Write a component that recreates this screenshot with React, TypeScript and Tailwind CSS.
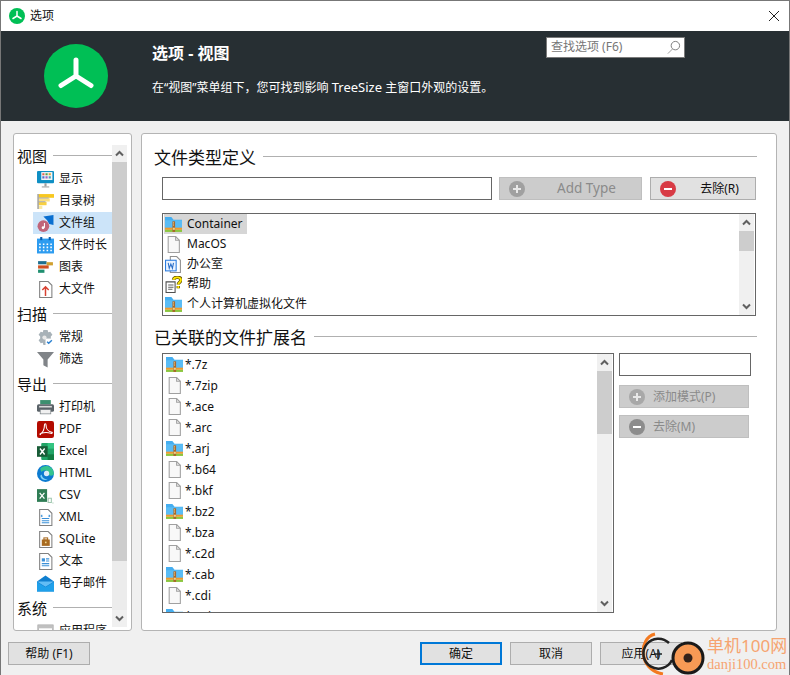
import type { ReactNode } from 'react';

const font = { fontFamily: '"Noto Sans", "Noto Sans CJK SC", sans-serif' };

function Svg({ children, className = '' }: { children: ReactNode; className?: string }) {
  return (
    <svg viewBox="0 0 16 16" className={`w-[17px] h-[17px] shrink-0 ${className}`}>
      {children}
    </svg>
  );
}

function FileIcon() {
  return (
    <Svg>
      <path d="M3 .5h7l3.5 3.5v11.5H3z" fill="#f8f8f8" stroke="#a0a0a0" />
      <path d="M10 .5V4h3.5" fill="none" stroke="#a0a0a0" />
    </Svg>
  );
}

function ZipIcon() {
  return (
    <Svg>
      <path d="M0 1h6l2 2.500h8V11H0z" fill="#45aef0" />
      <path d="M0 4h16v7H0z" fill="#5abcf5" />
      <rect x="0" y="11" width="16" height="2" fill="#f09a30" />
      <rect x="0" y="13" width="16" height="2" fill="#8cc63f" />
      <rect x="7" y="5" width="2.500" height="10" fill="#a8682a" />
      <rect x="7.500" y="6" width="1" height="1" fill="#f2d08a" />
      <rect x="7.500" y="8" width="1" height="1" fill="#f2d08a" />
      <rect x="7.300" y="11" width="2" height="2" fill="#f2d08a" />
    </Svg>
  );
}

function WordIcon() {
  return (
    <Svg>
      <path d="M5 .5h6l3.500 3.500v11.500H5z" fill="#fff" stroke="#909090" />
      <rect x=".5" y="4" width="10" height="10" fill="#eaf3ff" stroke="#2b7de0" />
      <path d="M3 6.500l1 5 1.500-4 1.500 4 1-5" fill="none" stroke="#2b6fc8" />
    </Svg>
  );
}

function HelpIcon() {
  return (
    <Svg>
      <path d="M1 5.500h8.500v10H1z" fill="#fff" stroke="#505050" />
      <path d="M3 8.500h5M3 10.500h5M3 12.500h4" stroke="#606060" />
      <path d="M8 3.500C8.500.5 15 .5 15 3.800c0 2-2.500 2.200-2.500 4.200M12.500 9.500v2" fill="none" stroke="#5a4a00" strokeWidth="3.200" />
      <path d="M8 3.500C8.500.5 15 .5 15 3.800c0 2-2.500 2.200-2.500 4.200M12.500 9.500v2" fill="none" stroke="#ffe600" strokeWidth="1.800" />
    </Svg>
  );
}

const sideIcons: Record<string, ReactNode> = {
  display: (
    <Svg>
      <rect x="0" y="0" width="16" height="11.500" rx="1" fill="#0f8fc4" />
      <rect x="4" y="1" width="10.500" height="7.500" fill="#f4f4f4" />
      <path d="M5 2h2v2H5z" fill="#e06050" />
      <path d="M8 2h2v2H8z" fill="#50a050" />
      <path d="M11 2h2v2h-2z" fill="#e0a030" />
      <path d="M5 5h2v2H5z" fill="#5070d0" />
      <path d="M8 5h2v2H8z" fill="#a060c0" />
      <path d="M11 5h2v2h-2z" fill="#40a0c0" />
      <rect x="7" y="11.500" width="2" height="3" fill="#a0a0a0" />
      <rect x="4.500" y="14.500" width="7" height="1" fill="#a0a0a0" />
    </Svg>
  ),
  tree: (
    <Svg>
      <rect x="1" y="1" width="15" height="3.500" fill="#f8c820" />
      <rect x="1" y="5" width="11" height="3" fill="#fbe080" />
      <rect x="1" y="8.500" width="8" height="3" fill="#f8d040" />
      <rect x="1" y="12" width="4" height="3" fill="#fbe9a0" />
      <path d="M1 1v14" stroke="#a8a8a8" strokeWidth="1.500" />
      <path d="M1 4.700h10M1 8.200h7" stroke="#a8a8a8" />
    </Svg>
  ),
  group: (
    <Svg>
      <path d="M6 1.500l9.500-1.500v9.500l-4-1-2-3.500z" fill="#0a6fd0" />
      <circle cx="6" cy="10.500" r="5.500" fill="#c0657a" />
      <path d="M7 7.500v4.500" stroke="#fff" />
      <circle cx="5.700" cy="12" r="1.300" fill="#fff" />
    </Svg>
  ),
  calendar: (
    <Svg>
      <rect x="0" y="1.500" width="16" height="14" fill="#2d9cf0" />
      <rect x="3" y="0" width="2" height="3" fill="#0a5fb0" />
      <rect x="11" y="0" width="2" height="3" fill="#0a5fb0" />
      <path d="M2 6h1.500v1.500H2zM5.500 6H7v1.500H5.500zM9 6h1.500v1.500H9zM12.500 6H14v1.500h-1.500zM2 9h1.500v1.500H2zM5.500 9H7v1.500H5.500zM9 9h1.500v1.500H9zM12.500 9H14v1.500h-1.500zM2 12h1.500v1.500H2zM5.500 12H7v1.500H5.500zM9 12h1.500v1.500H9zM12.500 12H14v1.500h-1.500z" fill="#fff" />
    </Svg>
  ),
  chart: (
    <Svg>
      <rect x="1" y="2" width="8" height="3" fill="#1f6f8f" />
      <rect x="9" y="3" width="6" height="3" fill="#d0a030" />
      <rect x="1" y="6" width="10" height="3" fill="#d05020" />
      <rect x="1" y="10" width="6" height="3" fill="#1f8f70" />
    </Svg>
  ),
  bigfile: (
    <Svg>
      <path d="M2.500.5h8l3.500 3.500v11.500H2.500z" fill="#fff" stroke="#808080" />
      <path d="M8 14V6M5 8.500L8 5.500l3 3" fill="none" stroke="#d84030" strokeWidth="1.400" />
    </Svg>
  ),
  gear: (
    <Svg>
      <path d="M6 1h4l.5 2 2-.5 2 3-1.500 1.500v2l1.500 1.500-2 3-2-.5-.5 2H6l-.5-2-2 .5-2-3L3 9V7L1.500 5.500l2-3 2 .5z" fill="#a8b2b8" />
      <circle cx="7" cy="8" r="2" fill="#e8e8e8" />
      <rect x="8" y="9" width="7" height="6" fill="#fff" />
      <path d="M9.500 12l1.500 1.500 3-3" fill="none" stroke="#2a80d0" strokeWidth="1.300" />
    </Svg>
  ),
  funnel: (
    <Svg>
      <path d="M0 1h16l-6 7v7.500l-4-2V8z" fill="#808488" />
    </Svg>
  ),
  printer: (
    <Svg>
      <rect x="3" y="1" width="10" height="4" fill="#3d8f6f" />
      <rect x="0" y="5" width="16" height="7" rx="1.500" fill="#5a6268" />
      <rect x="2" y="6.500" width="12" height="1.500" fill="#d8d8d8" />
      <rect x="3" y="10" width="10" height="4" fill="#f0f0f0" stroke="#70787c" strokeWidth=".6" />
    </Svg>
  ),
  pdf: (
    <Svg>
      <rect x="0" y="0" width="16" height="16" rx="2" fill="#b30b00" />
      <path d="M2.500 12.500c3-1.500 4.500-5 4.500-8.500 0-2 1.500-2 1.500 0 0 3 2 6 5.500 6.500 1 .5 0 1.500-1 1-3-1-6-1-9 0-1 1.500-1.500 1.500-.5 1z" fill="none" stroke="#fff" strokeWidth="1" />
    </Svg>
  ),
  excel: (
    <Svg>
      <rect x="4" y="0" width="12" height="16" rx="1" fill="#21a366" />
      <rect x="10" y="0" width="6" height="5.300" fill="#33c481" />
      <rect x="10" y="10.700" width="6" height="5.300" fill="#107c41" />
      <rect x="0" y="3" width="10" height="10" fill="#185c37" />
      <path d="M2.800 5.200l4.400 5.600M7.200 5.200l-4.400 5.600" stroke="#fff" strokeWidth="1.300" />
    </Svg>
  ),
  edge: (
    <Svg>
      <circle cx="8" cy="8" r="8" fill="#0c7bd0" />
      <path d="M3 3.500C6 -.5 15-.5 16 8c0 2-3 2.500-5 1.500 1-3-3-6-7-3z" fill="#35c38f" />
      <path d="M4.500 9c0 3 3 5 6 4-2.500 2-7 1-7.500-3z" fill="#7fd4f8" />
      <circle cx="9" cy="8" r="2.500" fill="#fff" opacity=".85" />
    </Svg>
  ),
  csv: (
    <Svg>
      <rect x="0" y="2" width="9.500" height="12" fill="#2f7d55" />
      <path d="M2.500 5.500l4.500 5.500M7 5.500L2.500 11" stroke="#fff" strokeWidth="1.200" />
      <path d="M10.500 10.500h3v4h-3zM15 14.500v1" fill="none" stroke="#a0c8b0" />
    </Svg>
  ),
  xml: (
    <Svg>
      <path d="M2.500.5h8l3.500 3.500v11.500H2.500z" fill="#fff" stroke="#808080" />
      <path d="M5 5.500l-1 1 1 1M11 5.500l1 1-1 1M7 9h-2.500M11.500 9H6.500M11.500 11H4.500M11.500 13H4.500" fill="none" stroke="#3a90d8" />
    </Svg>
  ),
  sqlite: (
    <Svg>
      <path d="M2.500.5h8l3.500 3.500v11.500H2.500z" fill="#fff" stroke="#808080" />
      <rect x="4.500" y="8" width="7.500" height="6" fill="#a86a20" />
      <rect x="6.500" y="6.500" width="3.500" height="2" fill="none" stroke="#a86a20" />
      <rect x="7.500" y="10" width="1.500" height="1.500" fill="#f0d890" />
    </Svg>
  ),
  text: (
    <Svg>
      <path d="M2.500.5h8l3.500 3.500v11.500H2.500z" fill="#fff" stroke="#808080" />
      <rect x="4.500" y="5" width="3" height="3" fill="#3a90d8" />
      <path d="M8.500 5.500h3M8.500 7.500h3M4.500 10h7M4.500 12h7" stroke="#3a90d8" />
    </Svg>
  ),
  mail: (
    <Svg>
      <path d="M0 6l8-5.500L16 6v9.500H0z" fill="#0f7fd0" />
      <path d="M0 6h16L8 11z" fill="#63bdf5" />
      <path d="M0 6.500l8 5 8-5v9H0z" fill="#1fa0ea" />
    </Svg>
  ),
  last: (
    <Svg>
      <rect x="1" y="2" width="14" height="12" fill="#fff" stroke="#909090" />
      <rect x="1" y="2" width="14" height="3" fill="#c0c0c0" />
    </Svg>
  ),
};

const sideGroups = [
  {
    title: '视图',
    items: [
      ['display', '显示'],
      ['tree', '目录树'],
      ['group', '文件组'],
      ['calendar', '文件时长'],
      ['chart', '图表'],
      ['bigfile', '大文件'],
    ],
  },
  {
    title: '扫描',
    items: [
      ['gear', '常规'],
      ['funnel', '筛选'],
    ],
  },
  {
    title: '导出',
    items: [
      ['printer', '打印机'],
      ['pdf', 'PDF'],
      ['excel', 'Excel'],
      ['edge', 'HTML'],
      ['csv', 'CSV'],
      ['xml', 'XML'],
      ['sqlite', 'SQLite'],
      ['text', '文本'],
      ['mail', '电子邮件'],
    ],
  },
  {
    title: '系统',
    items: [['last', '应用程序']],
  },
];

const types: [ReactNode, string][] = [
  [<ZipIcon />, 'Container'],
  [<FileIcon />, 'MacOS'],
  [<WordIcon />, '办公室'],
  [<HelpIcon />, '帮助'],
  [<ZipIcon />, '个人计算机虚拟化文件'],
];

const exts: [boolean, string][] = [
  [true, '*.7z'],
  [false, '*.7zip'],
  [false, '*.ace'],
  [false, '*.arc'],
  [true, '*.arj'],
  [false, '*.b64'],
  [false, '*.bkf'],
  [true, '*.bz2'],
  [false, '*.bza'],
  [false, '*.c2d'],
  [true, '*.cab'],
  [false, '*.cdi'],
  [true, '*.cpio'],
];

function Chevron({ up }: { up?: boolean }) {
  return (
    <svg viewBox="0 0 9 7" className="w-[9px] h-[7px]">
      <path
        d={up ? 'M1 5.500l3.500-3.500 3.500 3.500' : 'M1 1.500l3.500 3.500 3.500-3.500'}
        fill="none"
        stroke="#606060"
        strokeWidth="2"
      />
    </svg>
  );
}

function ScrollBar({ thumb, track = 'bg-[#f0f0f0]' }: { thumb: string; track?: string }) {
  return (
    <div className={`w-[15px] shrink-0 flex flex-col ${track}`}>
      <div className="h-[17px] flex items-center justify-center bg-[#f0f0f0]">
        <Chevron up />
      </div>
      <div className={`bg-[#cdcdcd] ${thumb}`} />
      <div className="flex-1" />
      <div className="h-[17px] flex items-center justify-center bg-[#f0f0f0]">
        <Chevron />
      </div>
    </div>
  );
}

function Round({ minus, color }: { minus?: boolean; color: string }) {
  return (
    <svg viewBox="0 0 16 16" className="w-4 h-4 shrink-0">
      <circle cx="8" cy="8" r="8" fill={color} />
      <rect x="4" y="7" width="8" height="2" fill={minus ? '#fff' : '#e8e8e8'} />
      {!minus && <rect x="7" y="4" width="2" height="8" fill="#e8e8e8" />}
    </svg>
  );
}

function SectionTitle({ text }: { text: string }) {
  return (
    <div className="flex items-center h-[24px] -ml-px text-[17px] leading-none text-[#111]">
      <span>{text}</span>
      <div className="flex-1 h-px bg-[#b0b0b0] ml-[7px] -mt-px" />
    </div>
  );
}

function DialogButton({ label, primary }: { label: string; primary?: boolean }) {
  return (
    <button
      className={`w-[82px] h-[23px] bg-[#e1e1e1] text-[12px] text-[#111] flex items-center justify-center ${
        primary ? 'border-2 border-[#0078d7]' : 'border border-[#adadad]'
      }`}
    >
      {label}
    </button>
  );
}

function DisabledButton({ minus, label }: { minus?: boolean; label: string }) {
  return (
    <div className="w-[130px] h-[23px] bg-[#cccccc] border border-[#bfbfbf] flex items-center pl-[9px] gap-[8px] text-[12px] text-[#8a8a8a]">
      <Round minus={minus} color={minus ? '#8c8c8c' : '#a8a8a8'} />
      {label}
    </div>
  );
}

export default function App() {
  return (
    <div
      style={font}
      className="relative w-[790px] h-[675px] overflow-hidden flex flex-col bg-[#f0f0f0] border-t border-x border-[#777] text-[12px] text-[#111]"
    >
      <div className="h-[30px] shrink-0 bg-white flex items-center pl-[8px] pr-[9px]">
        <svg viewBox="0 0 16 16" className="w-4 h-4 mr-[5px]">
          <circle cx="8" cy="8" r="8" fill="#00bf55" />
          <path d="M8 3.500V8M8 8l-4 2.500M8 8l4 2.500" stroke="#fff" strokeWidth="1.500" strokeLinecap="round" fill="none" />
        </svg>
        <span>选项</span>
        <svg viewBox="0 0 12 12" className="w-[12px] h-[12px] ml-auto">
          <path d="M1 1l10 10M11 1L1 11" stroke="#222" strokeWidth="1" />
        </svg>
      </div>

      <div className="h-[90px] shrink-0 bg-[#272f33] flex pl-[43px] text-white">
        <svg viewBox="0 0 64 64" className="w-16 h-16 shrink-0 mt-[13px]">
          <circle cx="32" cy="32" r="32" fill="#00bf55" />
          <path d="M32 16V32M32 32L17 41.500M32 32L47 41.500" stroke="#fff" strokeWidth="5" strokeLinecap="round" fill="none" />
        </svg>
        <div className="ml-[44px] w-[394px] shrink-0">
          <div className="mt-[11px] h-[22px] leading-[22px] text-[16px] font-bold">选项 - 视图</div>
          <div className="mt-[13px] leading-[20px] whitespace-nowrap">
            在“视图”菜单组下，您可找到影响 <span className="text-[13px]">TreeSize</span> 主窗口外观的设置。
          </div>
        </div>
        <div className="mt-[6px] w-[139px] h-[21px] bg-white border border-[#7a7a7a] flex items-center pl-[4px] pr-[3px] pb-[2px] text-[#777]">
          查找选项 (F6)
          <svg viewBox="0 0 16 16" className="w-[15px] h-[15px] ml-auto mt-[2px]">
            <circle cx="10" cy="6" r="4.500" fill="none" stroke="#777" />
            <path d="M7 9.500l-5 5" stroke="#999" />
          </svg>
        </div>
      </div>

      <div className="flex-1 min-h-0 flex flex-col pt-[12px] pl-[12px] pr-[12px]">
        <div className="h-[498px] shrink-0 flex gap-[9px]">
          <div className="w-[119px] shrink-0 bg-white border border-[#b4b4b4] rounded-[3px] overflow-hidden flex pb-[3px] pr-[4px]">
            <div className="flex-1 min-w-0 pt-[12px] pl-[3px]">
              {sideGroups.map((g) => (
                <div key={g.title} className="mb-[4px]">
                  <div className="h-[22px] flex items-center text-[15px] leading-none">
                    <span className="-mt-[2px]">{g.title}</span>
                    <div className="flex-1 h-px bg-[#b0b0b0] ml-[6px] -mt-[4px]" />
                  </div>
                  {g.items.map(([icon, label]) => (
                    <div
                      key={label}
                      className={`h-[22px] ml-[16px] flex items-center pl-[4px] gap-[5px] whitespace-nowrap ${
                        label === '文件组' ? 'bg-[#cce4f9]' : ''
                      }`}
                    >
                      {sideIcons[icon]}
                      <span>{label}</span>
                    </div>
                  ))}
                </div>
              ))}
            </div>
            <div className="mt-[11px] flex">
              <ScrollBar thumb="h-[399px]" track="bg-[#ececec]" />
            </div>
          </div>

          <div className="flex-1 min-w-0 bg-white border border-[#b4b4b4] rounded-[3px] pt-[11px] pl-[13px] pr-[19px]">
            <SectionTitle text="文件类型定义" />
            <div className="mt-[8px] ml-[7px] flex">
              <div className="w-[330px] h-[23px] bg-white border border-[#666]" />
              <div className="ml-[7px] w-[143px] h-[23px] bg-[#cccccc] border border-[#bfbfbf] flex items-center pl-[9px] text-[13.500px] text-[#8a8a8a]">
                <Round color="#a0a0a0" />
                <span className="flex-1 text-center pl-[7px]">Add Type</span>
              </div>
              <div className="ml-[8px] w-[106px] h-[23px] bg-[#e1e1e1] border border-[#adadad] flex items-center pl-[9px]">
                <Round minus color="#d83b45" />
                <span className="flex-1 text-center pl-[8px]">去除(R)</span>
              </div>
            </div>
            <div className="mt-[13px] ml-[7px] w-[594px] h-[103px] border border-[#666] flex">
              <div className="flex-1 min-w-0 pl-[1px] pt-0">
                {types.map(([icon, label], i) => (
                  <div key={label} className="h-[20px] flex">
                    <div
                      className={`h-[20px] flex items-center gap-[5px] pl-[1px] pr-[4px] ${
                        i === 0 ? 'bg-[#d6d6d6]' : ''
                      }`}
                    >
                      {icon}
                      <span>{label}</span>
                    </div>
                  </div>
                ))}
              </div>
              <ScrollBar thumb="h-[20px]" />
              <div className="w-px" />
            </div>

            <div className="mt-[9px]">
              <SectionTitle text="已关联的文件扩展名" />
            </div>
            <div className="mt-[4px] ml-[7px] flex">
              <div className="w-[452px] h-[260px] border border-[#666] flex overflow-hidden">
                <div className="flex-1 min-w-0 pl-[3px] overflow-hidden">
                  {exts.map(([zip, label]) => (
                    <div key={label} className="h-[21px] flex items-center gap-[2px]">
                      <div className="w-[17px] flex justify-center">{zip ? <ZipIcon /> : <FileIcon />}</div>
                      <span>{label}</span>
                    </div>
                  ))}
                </div>
                <ScrollBar thumb="h-[63px]" />
                <div className="w-px" />
              </div>
              <div className="ml-[5px] flex flex-col">
                <div className="w-[132px] h-[23px] bg-white border border-[#666]" />
                <div className="mt-[9px]">
                  <DisabledButton label="添加模式(P)" />
                </div>
                <div className="mt-[7px]">
                  <DisabledButton minus label="去除(M)" />
                </div>
              </div>
            </div>
          </div>
        </div>

        <div className="mt-[11px] -ml-[5px] flex">
          <DialogButton label="帮助 (F1)" />
          <div className="ml-[330px] flex gap-[8px]">
            <DialogButton primary label="确定" />
            <DialogButton label="取消" />
            <DialogButton label="应用(A)" />
          </div>
        </div>
      </div>

      {/* watermark over the corner */}
      <div className="absolute right-0 top-[635px] flex items-start pointer-events-none">
        <svg viewBox="0 0 66 41" className="w-[66px] h-[41px] -mr-px overflow-visible">
          <path d="M13 -2C-4 2 -4 34 21 38" fill="none" stroke="#f37a20" strokeWidth="3" />
          <path d="M27 7A15 15 0 1 0 30 24" fill="none" stroke="#222" strokeWidth="2.500" />
          <path d="M12 18h8M16 14v9" stroke="#222" strokeWidth="1.500" />
          <circle cx="46" cy="22" r="15" fill="#f79a55" stroke="#1a1a1a" strokeWidth="3" />
          <circle cx="46" cy="22" r="4.500" fill="#33221a" />
        </svg>
        <div className="w-[82px] flex flex-col text-[#f6a470]">
          <span className="text-[17px] h-[20px] leading-[20px] whitespace-nowrap">单机100网</span>
          <span className="mt-px text-[14.500px] h-[15px] leading-[15px] whitespace-nowrap" style={{ fontFamily: '"Liberation Serif", serif' }}>
            danji100.com
          </span>
        </div>
      </div>
    </div>
  );
}
